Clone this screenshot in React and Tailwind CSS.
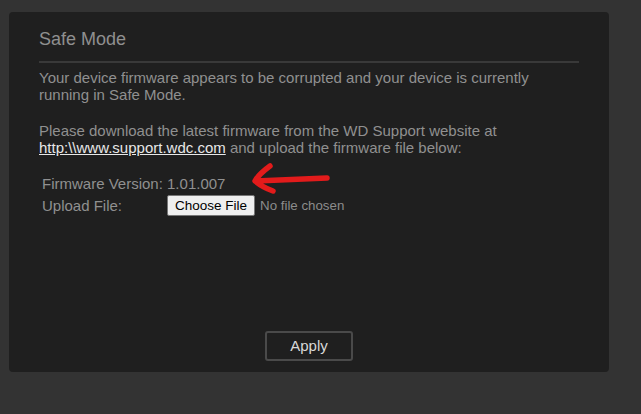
export default function App() {
  const font = { fontFamily: '"Liberation Sans", Arial, sans-serif' };
  return (
    <div className="w-[641px] h-[414px] bg-[#333333] pt-[12px] pl-[9px]" style={font}>
      <div className="w-[600px] h-[360px] bg-[#1f1f1f] rounded-[4px] flex flex-col pl-[30px] pr-[30px] pt-[16px] pb-[11px]">
        <div className="text-[18px] leading-[22px] text-[#8f8f8f]">Safe Mode</div>
        <div className="mt-[11px] h-[2px] bg-[#393939]" />
        <p className="mt-[6px] text-[15px] leading-[17px] text-[#909090]">
          Your device firmware appears to be corrupted and your device is currently
          <br />
          running in Safe Mode.
        </p>
        <p className="mt-[19px] text-[15px] leading-[17px] text-[#909090]">
          Please download the latest firmware from the WD Support website at
          <br />
          <span className="text-[#e8e8e8] underline">http:\\www.support.wdc.com</span> and upload the firmware file below:
        </p>
        <div className="relative mt-[19px] pl-[3px] text-[15px] leading-[17px] text-[#909090]">
          <div>Firmware Version: 1.01.007</div>
          <svg
            className="absolute left-[211px] top-[-13px]"
            width="82"
            height="34"
            viewBox="0 0 82 34"
            fill="none"
          >
            <path
              d="M20 4 Q 9 12 5 19 Q 12 25 23 29 M6 19 L77 16"
              stroke="#e21b1b"
              strokeWidth="5.5"
              strokeLinecap="round"
              strokeLinejoin="round"
            />
          </svg>
          <div className="flex items-center mt-[3px]">
            <span className="w-[125px]">Upload File:</span>
            <span className="h-[21px] px-[7px] flex items-center bg-[#efefef] border border-[#767676] rounded-[2px] text-[13.5px] text-black">
              Choose File
            </span>
            <span className="ml-[5px] text-[13.3px] text-[#8c8c8c]">No file chosen</span>
          </div>
        </div>
        <div className="mt-auto flex justify-center">
          <div className="w-[88px] h-[30px] border-2 border-[#4a4a4a] rounded-[3px] flex items-center justify-center text-[15px] text-[#d8d8d8]">
            Apply
          </div>
        </div>
      </div>
    </div>
  );
}
